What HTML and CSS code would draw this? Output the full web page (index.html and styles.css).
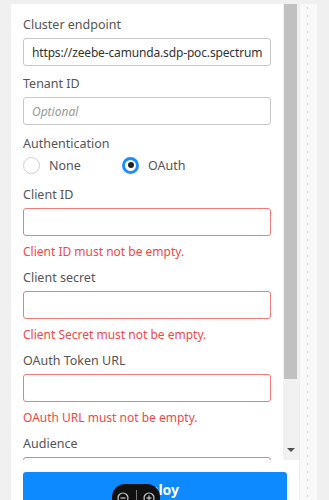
FILE: index.html
```html
<html>
<head>
	<title>Deploy Diagram</title>
	<meta http-equiv="Content-Type" content="text/html; charset=UTF-8">
	<link rel="stylesheet" href="styles.css">
</head>
<body>
	<div class="page">
		<div class="panel">
			<div class="scroll-area">
				<div class="form">
					<div class="field">
						<div class="field-label">Cluster endpoint</div>
						<input class="text-input url-input" type="text" value="https://zeebe-camunda.sdp-poc.spectrum.com:443">
					</div>
					<div class="field">
						<div class="field-label">Tenant ID</div>
						<input class="text-input" type="text" placeholder="Optional">
					</div>
					<div class="field field-radio">
						<div class="field-label">Authentication</div>
						<div class="radio-row">
							<div class="radio-option">
								<span class="radio"></span>
								<span class="radio-text">None</span>
							</div>
							<div class="radio-option">
								<span class="radio radio-checked"></span>
								<span class="radio-text">OAuth</span>
							</div>
						</div>
					</div>
					<div class="field">
						<div class="field-label">Client ID</div>
						<input class="text-input invalid" type="text">
						<div class="field-error">Client ID must not be empty.</div>
					</div>
					<div class="field">
						<div class="field-label">Client secret</div>
						<input class="text-input invalid" type="text">
						<div class="field-error">Client Secret must not be empty.</div>
					</div>
					<div class="field">
						<div class="field-label">OAuth Token URL</div>
						<input class="text-input invalid" type="text">
						<div class="field-error">OAuth URL must not be empty.</div>
					</div>
					<div class="field">
						<div class="field-label">Audience</div>
						<input class="text-input invalid" type="text">
						<div class="field-error">Audience must not be empty.</div>
					</div>
				</div>
				<div class="scrollbar">
					<div class="scroll-thumb"></div>
					<div class="scroll-arrow"></div>
				</div>
			</div>
			<div class="footer">
				<div class="deploy-button">Deploy</div>
			</div>
		</div>
		<div class="ruler"></div>
	</div>

	<div class="zoom-controls">
		<svg class="zoom-icon" width="12" height="12" viewBox="0 0 12 12">
			<circle cx="6" cy="6" r="5" fill="none" stroke="#ccc" stroke-width="1.2"/>
			<line x1="3.5" y1="6" x2="8.5" y2="6" stroke="#ccc" stroke-width="1.2"/>
		</svg>
		<span class="zoom-divider"></span>
		<svg class="zoom-icon" width="12" height="12" viewBox="0 0 12 12">
			<circle cx="6" cy="6" r="5" fill="none" stroke="#ccc" stroke-width="1.2"/>
			<line x1="3.5" y1="6" x2="8.5" y2="6" stroke="#ccc" stroke-width="1.2"/>
			<line x1="6" y1="3.5" x2="6" y2="8.5" stroke="#ccc" stroke-width="1.2"/>
		</svg>
	</div>
</body>
</html>
```

FILE: styles.css
```css
	body {
		background-color: #f0f0f0;
		overflow: hidden;
		height: 100%;
		margin: 0;
		padding: 0;
		font-family: "Noto Sans", "Open Sans", sans-serif;
	}

	.page {
		display: flex;
		padding: 4px 0 0 11px;
		height: 496px;
	}

	.panel {
		display: flex;
		flex-direction: column;
		width: 288px;
		background-color: #fff;
	}

	.scroll-area {
		display: flex;
		height: 456px;
	}

	.form {
		flex: 1;
		overflow: hidden;
		padding: 13px 12px 0 12px;
	}

	.field {
		margin-bottom: 10px;
	}

	.field-radio {
		margin-top: 11px;
		margin-bottom: 12px;
	}

	.field-label {
		font-size: 12.5px;
		line-height: 16px;
		color: #555;
		margin-bottom: 5px;
	}

	.text-input {
		display: block;
		width: 100%;
		height: 28px;
		box-sizing: border-box;
		border: 1px solid #c8c8c8;
		border-radius: 3px;
		padding: 0 8px;
		font-family: inherit;
		font-size: 12px;
		color: #333;
		outline: none;
		background-color: #fff;
	}

	.url-input {
		letter-spacing: -0.15px;
	}

	.text-input::placeholder {
		color: #999;
		font-style: italic;
	}

	.text-input.invalid {
		border-color: #f07b7b;
	}

	.field-error {
		margin-top: 8px;
		margin-bottom: 1px;
		font-size: 12px;
		line-height: 16px;
		color: #f04848;
	}

	.radio-row {
		display: flex;
		height: 20px;
		align-items: center;
		margin-top: -2px;
	}

	.radio-option {
		display: flex;
		align-items: center;
		width: 99px;
	}

	.radio {
		display: inline-block;
		width: 17px;
		height: 17px;
		box-sizing: border-box;
		border: 1px solid #d0d0d0;
		border-radius: 50%;
		margin-right: 9px;
		position: relative;
	}

	.radio-checked {
		border: 3px solid #1a8dff;
	}

	.radio-checked::after {
		content: "";
		position: absolute;
		left: 2.5px;
		top: 2.5px;
		width: 6px;
		height: 6px;
		border-radius: 50%;
		background-color: #222;
	}

	.radio-text {
		font-size: 12.5px;
		color: #555;
	}

	.scrollbar {
		display: flex;
		flex-direction: column;
		justify-content: space-between;
		width: 16px;
		background-color: #f1f1f1;
	}

	.scroll-thumb {
		height: 375px;
		margin: 0 2px 0 1px;
		background-color: #c1c1c1;
	}

	.scroll-arrow {
		align-self: center;
		margin-bottom: 8px;
		width: 0;
		height: 0;
		border-left: 4px solid transparent;
		border-right: 4px solid transparent;
		border-top: 4px solid #505050;
	}

	.footer {
		flex: 1;
		padding: 12px 12px 0 12px;
	}

	.deploy-button {
		height: 40px;
		width: 264px;
		background-color: #0d8aff;
		border-radius: 3px 3px 0 0;
		color: #fff;
		font-weight: bold;
		font-size: 14px;
		text-align: center;
		line-height: 36px;
	}

	.ruler {
		width: 17px;
		background-color: #f9f9f9;
		border-left: 1px solid #ececec;
		background-image: radial-gradient(circle, #d8d8d8 0.8px, transparent 1.2px);
		background-size: 17px 8px;
		background-position: -1px 0;
	}

	.zoom-controls {
		position: absolute;
		left: 112px;
		top: 484px;
		width: 48px;
		height: 28px;
		background-color: #111;
		border-radius: 13px;
		display: flex;
		align-items: center;
		justify-content: space-between;
		padding: 0 5px;
		box-sizing: border-box;
	}

	.zoom-divider {
		width: 1px;
		height: 16px;
		background-color: #777;
	}
```
